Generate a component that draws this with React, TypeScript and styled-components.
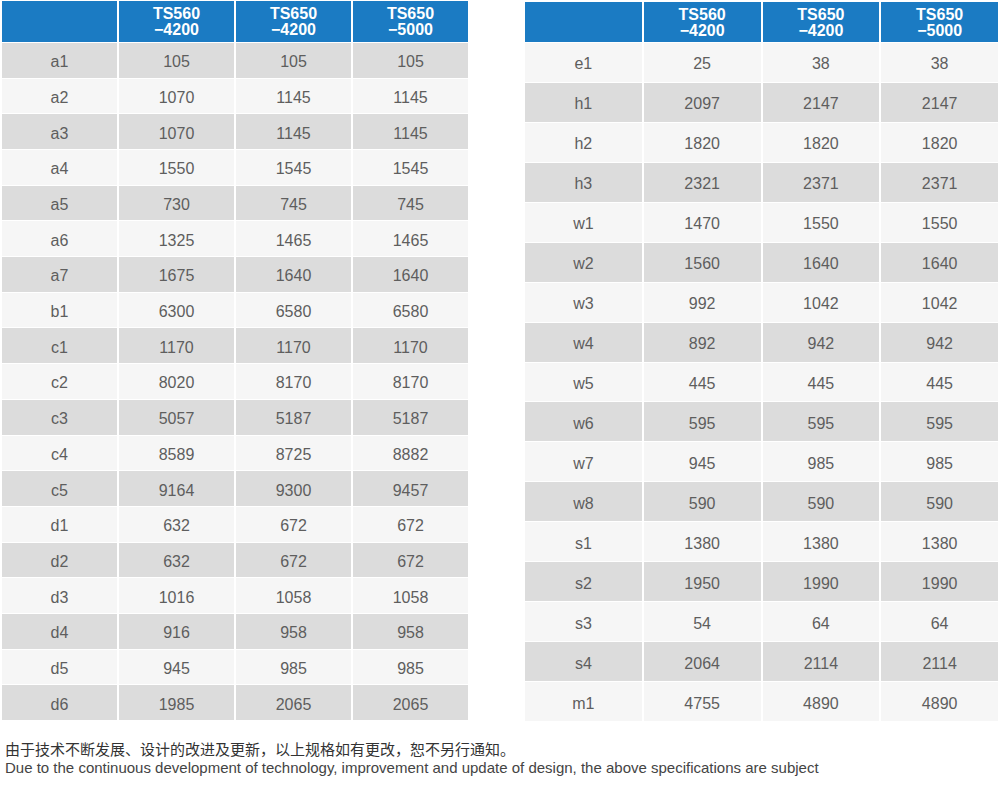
import React from 'react'
import styled, { createGlobalStyle } from 'styled-components'

const GlobalStyle = createGlobalStyle`
    body {
        margin: 0;
        background: #ffffff;
        font-family: "Liberation Sans", Arial, sans-serif;
    }
`

const colors = {
    blue: '#1b7bc3',
    dark: '#dcdcdc',
    light: '#f6f6f6',
    text: '#5e5e5e',
}

const Page = styled.div`
    width: 1000px;
    height: 786px;
    display: flex;
    flex-direction: column;
`

const Tables = styled.div`
    display: flex;
    justify-content: space-between;
    align-items: flex-start;
    padding: 1px 2px 0 2px;
`

const Table = styled.div<{ width: number, rows: number, head: number, top: number }>`
    width: ${ p => p.width }px;
    height: 719px;
    margin-top: ${ p => p.top }px;
    display: grid;
    grid-template-columns: repeat(4, 1fr);
    grid-template-rows: ${ p => p.head }px repeat(${ p => p.rows }, 1fr);
    column-gap: 2px;
    row-gap: 1px;
`

const HeadCell = styled.div`
    background-color: ${ colors.blue };
    color: #ffffff;
    font-weight: bold;
    font-size: 16px;
    line-height: 16px;
    display: flex;
    align-items: center;
    justify-content: center;
    text-align: center;
    padding-top: 1px;
`

const Cell = styled.div<{ dark: boolean }>`
    background-color: ${ p => p.dark ? colors.dark : colors.light };
    color: ${ colors.text };
    font-size: 16px;
    display: flex;
    align-items: center;
    justify-content: center;
    padding-top: 4px;
`

const Footer = styled.div`
    padding: 18px 0 0 5px;
    color: #444444;
    font-size: 15px;
    line-height: 19px;
    p{
        margin: 0;
        white-space: nowrap;
    }
    p.cn{
        font-family: "Noto Sans CJK SC", sans-serif;
        font-size: 15px;
        color: #333333;
    }
`

const models = [ ['TS560', '−4200'], ['TS650', '−4200'], ['TS650', '−5000'] ]

const leftRows : string[][] = [
    ['a1','105','105','105'],
    ['a2','1070','1145','1145'],
    ['a3','1070','1145','1145'],
    ['a4','1550','1545','1545'],
    ['a5','730','745','745'],
    ['a6','1325','1465','1465'],
    ['a7','1675','1640','1640'],
    ['b1','6300','6580','6580'],
    ['c1','1170','1170','1170'],
    ['c2','8020','8170','8170'],
    ['c3','5057','5187','5187'],
    ['c4','8589','8725','8882'],
    ['c5','9164','9300','9457'],
    ['d1','632','672','672'],
    ['d2','632','672','672'],
    ['d3','1016','1058','1058'],
    ['d4','916','958','958'],
    ['d5','945','985','985'],
    ['d6','1985','2065','2065'],
]

const rightRows : string[][] = [
    ['e1','25','38','38'],
    ['h1','2097','2147','2147'],
    ['h2','1820','1820','1820'],
    ['h3','2321','2371','2371'],
    ['w1','1470','1550','1550'],
    ['w2','1560','1640','1640'],
    ['w3','992','1042','1042'],
    ['w4','892','942','942'],
    ['w5','445','445','445'],
    ['w6','595','595','595'],
    ['w7','945','985','985'],
    ['w8','590','590','590'],
    ['s1','1380','1380','1380'],
    ['s2','1950','1990','1990'],
    ['s3','54','64','64'],
    ['s4','2064','2114','2114'],
    ['m1','4755','4890','4890'],
]

interface SpecTableProps {
    rows : string[][]
    width : number
    head : number
    top : number
    darkFirst : boolean
}

const SpecTable = ({ rows, width, head, top, darkFirst } : SpecTableProps) => (
    <Table width={width} rows={rows.length} head={head} top={top}>
        <HeadCell />
        { models.map( ([name, size], i) => (
            <HeadCell key={i}>{name}<br />{size}</HeadCell>
        )) }
        { rows.map( (row, r) => row.map( (value, c) => (
            <Cell key={`${r}-${c}`} dark={ (r % 2 === 0) === darkFirst }>{value}</Cell>
        ))) }
    </Table>
)

export default function App() {
    return (
        <Page>
            <GlobalStyle />
            <Tables>
                <SpecTable rows={leftRows} width={466} head={41} top={0} darkFirst={true} />
                <SpecTable rows={rightRows} width={473} head={40} top={1} darkFirst={false} />
            </Tables>
            <Footer>
                <p className='cn'>由于技术不断发展、设计的改进及更新，以上规格如有更改，恕不另行通知。</p>
                <p>Due to the continuous development of technology, improvement and update of design, the above specifications are subject</p>
            </Footer>
        </Page>
    )
}
